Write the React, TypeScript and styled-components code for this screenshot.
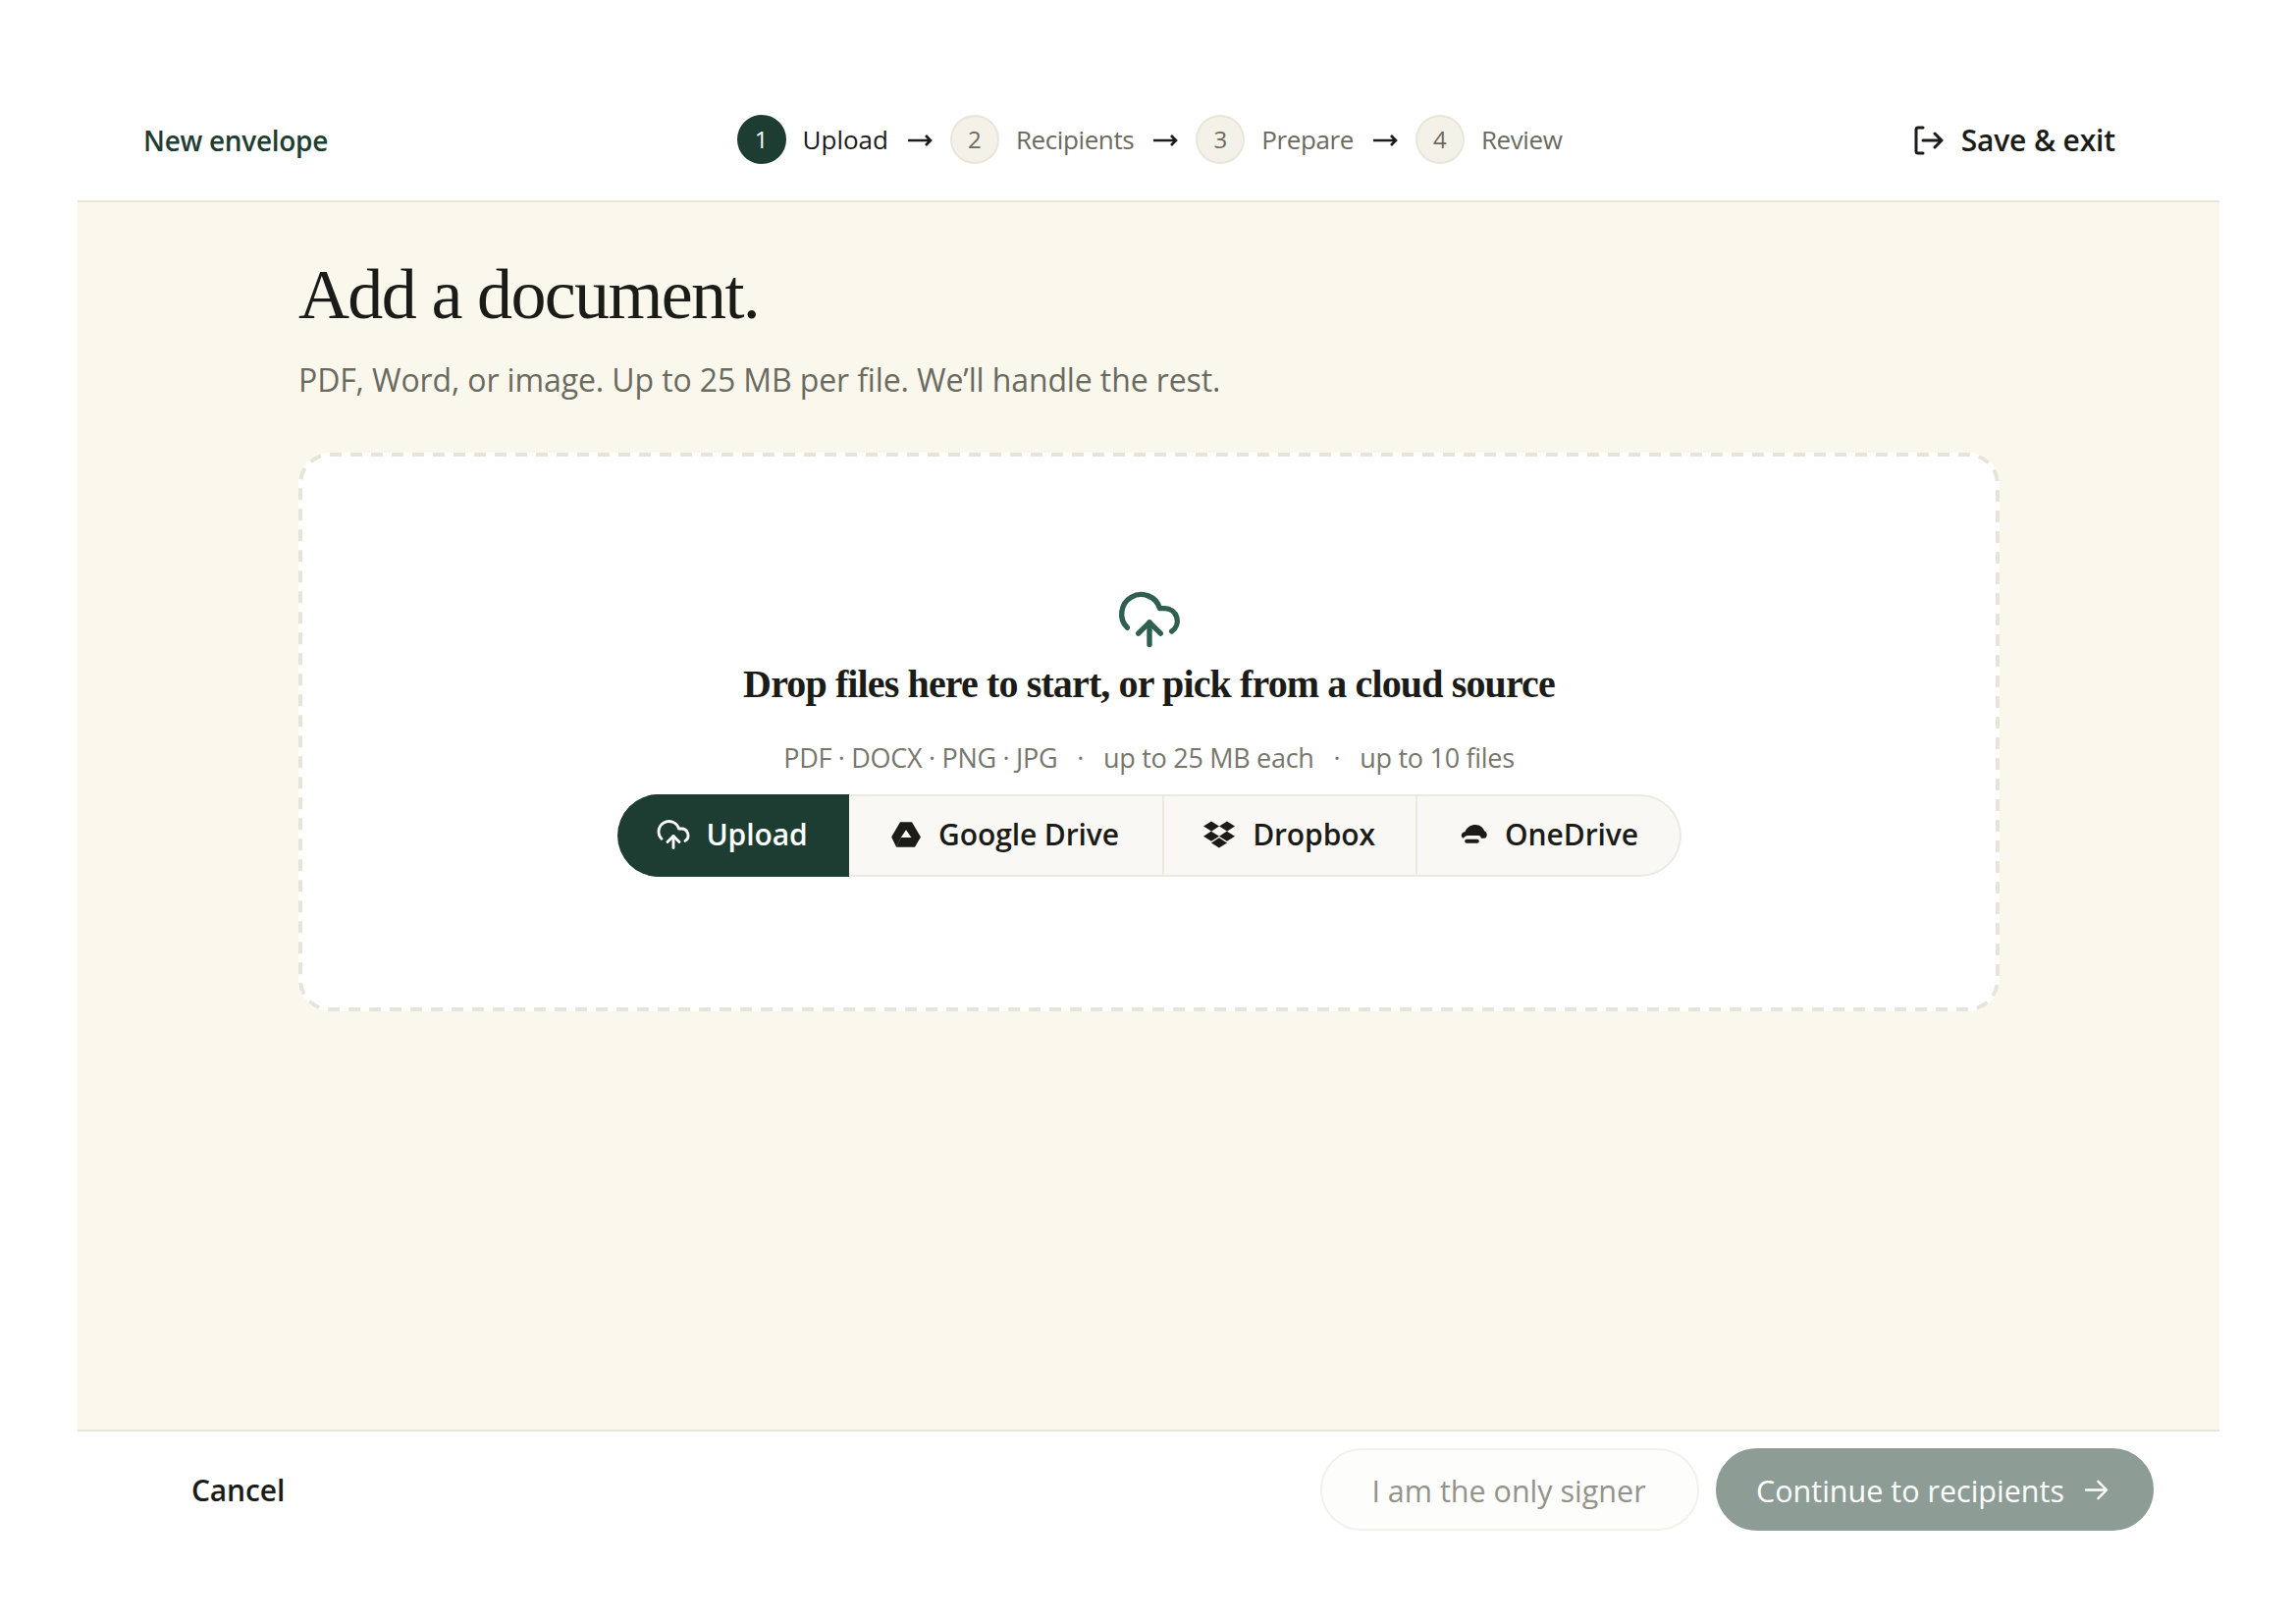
import React from "react";
import styled, { createGlobalStyle } from "styled-components";
import { FaDropbox } from "react-icons/fa";

const Global = createGlobalStyle`
  html, body { margin: 0; padding: 0; background: #fff; }
  * { box-sizing: border-box; }
`;

const sans = `"Open Sans", "Noto Sans", sans-serif`;
const serif = `"Liberation Serif", serif`;

const Page = styled.div`
  width: 2339px;
  height: 1653px;
  padding: 79px 78px 79px 79px;
  font-family: ${sans};
  color: #1b1b18;
`;
const Shell = styled.div`
  height: 100%;
  display: flex;
  flex-direction: column;
`;
const Header = styled.header`
  height: 127px;
  flex: none;
  display: grid;
  grid-template-columns: 1fr auto 1fr;
  align-items: center;
  padding: 0 67px;
  border-bottom: 2px solid #e8e6da;
`;
const Brand = styled.div`
  font-size: 28px;
  font-weight: 600;
  color: #1f3d32;
  letter-spacing: -0.3px;
  padding-top: 2px;
`;
const Stepper = styled.ol`
  display: flex;
  align-items: center;
  margin: 0 0 0 2px;
  padding: 0;
  list-style: none;
`;
const Step = styled.li`
  display: flex;
  align-items: center;
  gap: 17px;
`;
const Dot = styled.span<{ $active?: boolean }>`
  width: 50px;
  height: 50px;
  border-radius: 50%;
  display: flex;
  align-items: center;
  justify-content: center;
  font-size: 24px;
  font-weight: 500;
  background: ${(p) => (p.$active ? "#1e3d32" : "#f4f1e8")};
  color: ${(p) => (p.$active ? "#fff" : "#6b6a60")};
  border: 2px solid ${(p) => (p.$active ? "#1e3d32" : "#e8e6da")};
`;
const StepLabel = styled.span<{ $active?: boolean }>`
  font-size: 26px;
  letter-spacing: ${(p) => (p.$active ? "0" : "-0.4px")};
  color: ${(p) => (p.$active ? "#1b1b18" : "#6b6a60")};
`;
const Arrow = styled.svg`
  width: 26px;
  height: 14px;
  margin: 2px 18px 0 19px;
  flex: none;
`;
const SaveExit = styled.button`
  justify-self: end;
  display: flex;
  align-items: center;
  gap: 18px;
  border: 0;
  padding: 2px 0 0;
  margin-right: 39px;
  background: none;
  font-family: ${sans};
  font-size: 30px;
  font-weight: 600;
  letter-spacing: -0.15px;
  color: #1b1b18;
`;
const Main = styled.main`
  flex: 1;
  background: #faf8ed;
  padding: 54px 224px 0 225px;
`;
const Title = styled.h1`
  margin: 0;
  font-family: ${serif};
  font-weight: 400;
  font-size: 72px;
  line-height: 80px;
  letter-spacing: -1.65px;
  color: #1b1b18;
`;
const Lead = styled.p`
  margin: 24px 0 0;
  font-size: 32px;
  line-height: 46px;
  letter-spacing: -0.12px;
  color: #6b6a60;
`;
const Drop = styled.section`
  position: relative;
  margin-top: 51px;
  height: 569px;
  background: #fff;
  border-radius: 32px;
  display: flex;
  flex-direction: column;
  align-items: center;
  padding-top: 136px;
`;
const DashOutline = styled.svg`
  position: absolute;
  inset: 0;
  width: 100%;
  height: 100%;
  pointer-events: none;
`;
const DashRect = styled.rect`
  x: 2px;
  y: 2px;
  width: calc(100% - 4px);
  height: calc(100% - 4px);
  rx: 30px;
  ry: 30px;
  fill: none;
  stroke: #e7e5db;
  stroke-width: 4px;
  stroke-dasharray: 12 9;
`;
const DropTitle = styled.h2`
  margin: 8px 0 0;
  font-family: ${serif};
  font-weight: 700;
  font-size: 40px;
  line-height: 48px;
  letter-spacing: -0.87px;
  color: #1b1b18;
`;
const DropMeta = styled.p`
  display: flex;
  gap: 20px;
  margin: 33px 0 0;
  font-size: 27px;
  line-height: 36px;
  letter-spacing: -0.3px;
  color: #77766d;
`;
const Sources = styled.div`
  margin-top: 19px;
  display: flex;
  height: 84px;
  border-radius: 42px;
  overflow: hidden;
  background: #f9f8f4;
`;
const Source = styled.button<{ $primary?: boolean; $w: number; $gap?: number }>`
  width: ${(p) => p.$w}px;
  display: flex;
  align-items: center;
  justify-content: center;
  gap: ${(p) => p.$gap ?? 18}px;
  padding: 0 0 3px;
  border: 2px solid ${(p) => (p.$primary ? "#1e3d32" : "#ebe9e0")};
  border-left: 0;
  background: ${(p) => (p.$primary ? "#1e3d32" : "transparent")};
  color: ${(p) => (p.$primary ? "#fff" : "#1b1b18")};
  font-family: ${sans};
  font-size: 30px;
  font-weight: 600;
  letter-spacing: -0.1px;
  &:last-child { border-radius: 0 42px 42px 0; padding-left: 3px; }
`;
const Footer = styled.footer`
  height: 118px;
  flex: none;
  display: flex;
  align-items: center;
  justify-content: space-between;
  padding: 1px 67px 0 116px;
  border-top: 2px solid #e8e6da;
`;
const Cancel = styled.button`
  border: 0;
  padding: 2px 0 0;
  background: none;
  font-family: ${sans};
  font-size: 30px;
  font-weight: 600;
  letter-spacing: -0.15px;
  color: #1b1b18;
`;
const Actions = styled.div`
  display: flex;
  gap: 17px;
`;
const Pill = styled.button<{ $solid?: boolean; $w: number }>`
  width: ${(p) => p.$w}px;
  height: 84px;
  border-radius: 42px;
  display: flex;
  align-items: center;
  justify-content: center;
  gap: 20px;
  padding: 2px ${(p) => (p.$solid ? "5px" : "2px")} 0 0;
  font-family: ${sans};
  font-size: 30.5px;
  font-weight: 500;
  border: 2px solid ${(p) => (p.$solid ? "#8d9d96" : "#f2f1ea")};
  background: ${(p) => (p.$solid ? "#8d9d96" : "#fdfdfb")};
  color: ${(p) => (p.$solid ? "#fff" : "#93938b")};
`;

const CloudUpload = ({ size, stroke, color }: { size: number; stroke: number; color: string }) => (
  <svg width={size} height={size} viewBox="0 0 24 24" fill="none" stroke={color} strokeWidth={stroke} strokeLinecap="round" strokeLinejoin="round">
    <path d="M12 13v8" />
    <path d="M4 14.899A7 7 0 1 1 15.71 8h1.79a4.5 4.5 0 0 1 2.5 8.242" />
    <path d="m8 17 4-4 4 4" />
  </svg>
);

const StepArrow = () => (
  <Arrow viewBox="0 0 26 14" fill="none" stroke="#1b1b18" strokeWidth="2.6">
    <path d="M1 7h23M19 2l5 5-5 5" />
  </Arrow>
);

const ExitIcon = () => (
  <svg width="31" height="32" viewBox="0 0 31 32" fill="none" stroke="#1b1b18" strokeWidth="3" strokeLinecap="round" strokeLinejoin="round">
    <path d="M10 3H5a2 2 0 0 0-2 2v22a2 2 0 0 0 2 2h5" />
    <path d="M10 16h19M22 9l7 7-7 7" />
  </svg>
);

const DriveIcon = () => (
  <svg width="30" height="26" viewBox="0 0 30 26">
    <path fill="#1b1b18" stroke="#1b1b18" strokeWidth="1.5" strokeLinejoin="round" d="M9.500 1h11L29 15.500 23.500 25h-18L1 15.500z" />
    <path fill="#f9f8f4" d="M15 8.300l5.500 7.700H9.800z" />
    <path fill="none" stroke="#5a5a55" strokeWidth="0.6" d="M9.800 16L5.500 25" />
  </svg>
);

const OneDriveIcon = () => (
  <svg width="27" height="19" viewBox="0 0 80 57">
    <path fill="#1b1b18" d="M8 41C0 38-2 25 13 21 18 8 31 0 45 0c13 0 24 9 27 19 8 3 10 14 5 20-2 2-4 2-6 2H62c-1-5-3-8-8-8H22c-6 0-10 3-14 8z" />
    <rect x="12" y="44" width="44" height="12" rx="6" fill="#1b1b18" />
  </svg>
);

const steps = ["Upload", "Recipients", "Prepare", "Review"];

export default function App() {
  return (
    <Page>
      <Global />
      <Shell>
        <Header>
          <Brand>New envelope</Brand>
          <Stepper>
            {steps.map((label, i) => (
              <React.Fragment key={label}>
                <Step>
                  <Dot $active={i === 0}>{i + 1}</Dot>
                  <StepLabel $active={i === 0}>{label}</StepLabel>
                </Step>
                {i < steps.length - 1 && <StepArrow />}
              </React.Fragment>
            ))}
          </Stepper>
          <SaveExit>
            <ExitIcon />
            Save &amp; exit
          </SaveExit>
        </Header>
        <Main>
          <Title>Add a document.</Title>
          <Lead>PDF, Word, or image. Up to 25 MB per file. We’ll handle the rest.</Lead>
          <Drop>
            <DashOutline aria-hidden="true">
              <DashRect />
            </DashOutline>
            <CloudUpload size={68} stroke={1.9} color="#2f5f50" />
            <DropTitle>Drop files here to start, or pick from a cloud source</DropTitle>
            <DropMeta>
              <span>PDF · DOCX · PNG · JPG</span>
              <span>·</span>
              <span>up to 25 MB each</span>
              <span>·</span>
              <span>up to 10 files</span>
            </DropMeta>
            <Sources>
              <Source $primary $w={236} $gap={15}>
                <CloudUpload size={36} stroke={1.9} color="#fff" />
                Upload
              </Source>
              <Source $w={321}>
                <DriveIcon />
                Google Drive
              </Source>
              <Source $w={258}>
                <FaDropbox size={32} />
                Dropbox
              </Source>
              <Source $w={269}>
                <OneDriveIcon />
                OneDrive
              </Source>
            </Sources>
          </Drop>
        </Main>
        <Footer>
          <Cancel>Cancel</Cancel>
          <Actions>
            <Pill $w={386}>I am the only signer</Pill>
            <Pill $solid $w={446}>
              Continue to recipients
              <svg width="25" height="25" viewBox="0 0 26 26" fill="none" stroke="#fff" strokeWidth="2.4" strokeLinecap="round" strokeLinejoin="round">
                <path d="M2 13h22M15 4l9 9-9 9" />
              </svg>
            </Pill>
          </Actions>
        </Footer>
      </Shell>
    </Page>
  );
}
